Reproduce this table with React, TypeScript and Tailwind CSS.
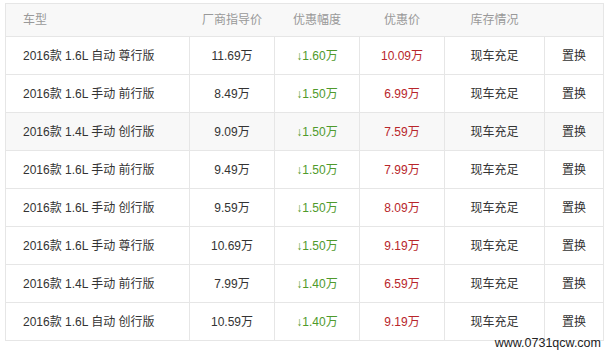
import React from 'react';

interface CarRow {
  name: string;
  guide: string;
  discount: string;
  price: string;
}

const rows: CarRow[] = [
  { name: '2016款 1.6L 自动 尊行版', guide: '11.69万', discount: '1.60万', price: '10.09万' },
  { name: '2016款 1.6L 手动 前行版', guide: '8.49万', discount: '1.50万', price: '6.99万' },
  { name: '2016款 1.4L 手动 创行版', guide: '9.09万', discount: '1.50万', price: '7.59万' },
  { name: '2016款 1.6L 手动 前行版', guide: '9.49万', discount: '1.50万', price: '7.99万' },
  { name: '2016款 1.6L 手动 创行版', guide: '9.59万', discount: '1.50万', price: '8.09万' },
  { name: '2016款 1.6L 手动 尊行版', guide: '10.69万', discount: '1.50万', price: '9.19万' },
  { name: '2016款 1.4L 手动 前行版', guide: '7.99万', discount: '1.40万', price: '6.59万' },
  { name: '2016款 1.6L 自动 创行版', guide: '10.59万', discount: '1.40万', price: '9.19万' },
];

const font = { fontFamily: '"Liberation Sans", "Noto Sans CJK SC", sans-serif' };

export default function App() {
  return (
    <div className="relative w-[610px] h-[352px] bg-white overflow-hidden" style={font}>
      <div className="pl-[5px] pt-[3px]">
        <table className="w-[598px] border-collapse table-fixed text-[12px]">
          <colgroup>
            <col className="w-[184px]" />
            <col className="w-[85px]" />
            <col className="w-[85px]" />
            <col className="w-[85px]" />
            <col className="w-[100px]" />
            <col className="w-[59px]" />
          </colgroup>
          <thead>
            <tr className="h-[33px] bg-[#f8f8f8] text-[#999]">
              <th className="border-l border-t border-[#e6e6e6] pl-[17px] text-left font-normal">车型</th>
              <th className="border-t border-[#e6e6e6] font-normal">厂商指导价</th>
              <th className="border-t border-[#e6e6e6] font-normal">优惠幅度</th>
              <th className="border-t border-[#e6e6e6] font-normal">优惠价</th>
              <th className="border-t border-[#e6e6e6] font-normal">库存情况</th>
              <th className="border-t border-r border-[#e6e6e6] font-normal"></th>
            </tr>
          </thead>
          <tbody className="text-[#333]">
            {rows.map((row, i) => (
              <tr key={i} className={`h-[38px] ${i === 2 ? 'bg-[#f8f8f8]' : 'bg-white'}`}>
                <td className="border border-[#e6e6e6] pl-[17px] text-left">{row.name}</td>
                <td className="border border-[#e6e6e6] text-center">{row.guide}</td>
                <td className="border border-[#e6e6e6] text-center text-[#4f9a2c]">↓{row.discount}</td>
                <td className="border border-[#e6e6e6] text-center text-[#b8262b]">{row.price}</td>
                <td className="border border-[#e6e6e6] text-center">现车充足</td>
                <td className="border border-[#e6e6e6] text-center">置换</td>
              </tr>
            ))}
          </tbody>
        </table>
      </div>
      <div className="absolute right-[9px] top-[336px] text-[12.5px] leading-[15px] text-[#222]">
        www.0731qcw.com
      </div>
    </div>
  );
}
